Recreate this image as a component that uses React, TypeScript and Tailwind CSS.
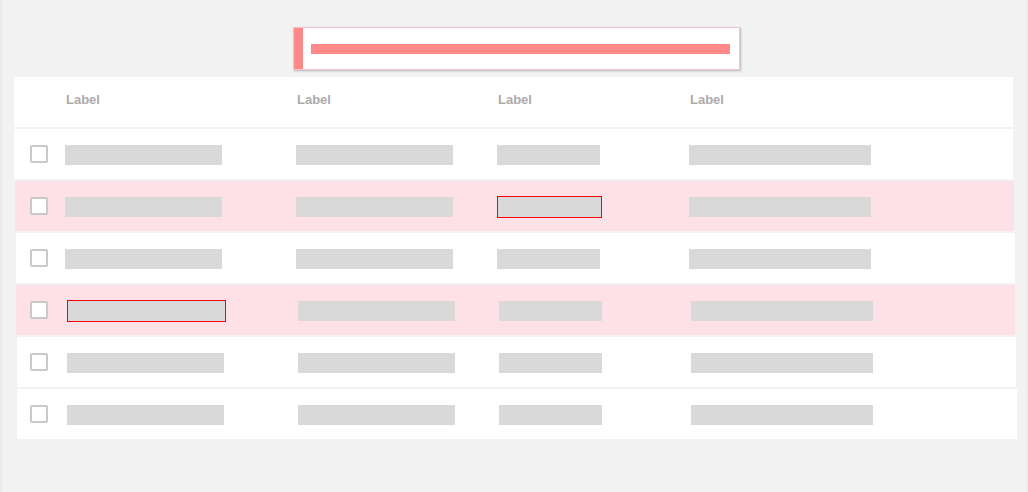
type Row = {
  rowClass: string;
  padClass: string;
  pink?: boolean;
  shifted?: boolean;
  flagged?: number;
};

// rows drift right by a pixel or so as they go down, as in the mock
const rows: Row[] = [
  { rowClass: 'ml-[12px]', padClass: 'pl-[16px]' },
  { rowClass: 'ml-[13px]', padClass: 'pl-[15px]', pink: true, flagged: 3 },
  { rowClass: 'ml-[14px]', padClass: 'pl-[14px]' },
  { rowClass: 'ml-[14px]', padClass: 'pl-[14px]', pink: true, shifted: true, flagged: 1 },
  { rowClass: 'ml-[15px]', padClass: 'pl-[13px]', shifted: true },
  { rowClass: 'ml-[15px] w-[1000px]', padClass: 'pl-[13px]', shifted: true },
];

const headers = ['Label', 'Label', 'Label', 'Label'];

function Placeholder({ w, wFlag, flagged }: { w: string; wFlag: string; flagged: boolean }) {
  if (flagged) {
    return <div className={`${wFlag} mt-[2px] h-[22px] border border-[#ff0000] bg-[#d9d9d9]`} />;
  }
  return <div className={`${w} mt-[2px] h-[20px] bg-[#d9d9d9]`} />;
}

function Checkbox() {
  return <div className="h-[18px] w-[18px] rounded-[2px] border-2 border-[#c9c9c9] bg-white" />;
}

export default function App() {
  return (
    <div
      className="h-[492px] w-[1028px] overflow-hidden border-x-2 border-[#ebebeb] bg-[#f2f2f2]"
      style={{ fontFamily: '"Liberation Sans", Arial, sans-serif' }}
    >
      {/* toast */}
      <div className="ml-[291px] mt-[27px] flex h-[43px] w-[447px] border border-[#f4c3ce] bg-white shadow-[1px_1px_2px_rgba(0,0,0,0.25)]">
        <div className="w-[9px] bg-[#ff8888]" />
        <div className="flex flex-1 items-center pl-[8px] pr-[9px]">
          <div className="h-[10px] w-full bg-[#ff8888]" />
        </div>
      </div>

      {/* table */}
      <div className="mt-[7px] flex flex-col gap-[2px]">
        <div className="ml-[12px] flex h-[50px] w-[999px] items-center bg-white pb-[4px] text-[13px] font-bold text-[#ababab]">
          <div className="w-[52px]" />
          <div className="w-[231px]">{headers[0]}</div>
          <div className="w-[201px]">{headers[1]}</div>
          <div className="w-[192px]">{headers[2]}</div>
          <div>{headers[3]}</div>
        </div>

        {rows.map((r, i) => (
          <div
            key={i}
            className={`${r.rowClass} ${r.padClass} flex h-[50px] w-[999px] items-center ${r.pink ? 'bg-[#fee0e7]' : 'bg-white'}`}
          >
            <Checkbox />
            <div className={r.shifted ? 'w-[19px]' : 'w-[17px]'} />
            <div className="w-[231px]">
              <Placeholder w="w-[157px]" wFlag="w-[159px]" flagged={r.flagged === 1} />
            </div>
            <div className="w-[201px]">
              <Placeholder w="w-[157px]" wFlag="w-[159px]" flagged={r.flagged === 2} />
            </div>
            <div className="w-[192px]">
              <Placeholder w="w-[103px]" wFlag="w-[105px]" flagged={r.flagged === 3} />
            </div>
            <div>
              <Placeholder w="w-[182px]" wFlag="w-[184px]" flagged={r.flagged === 4} />
            </div>
          </div>
        ))}
      </div>
    </div>
  );
}
